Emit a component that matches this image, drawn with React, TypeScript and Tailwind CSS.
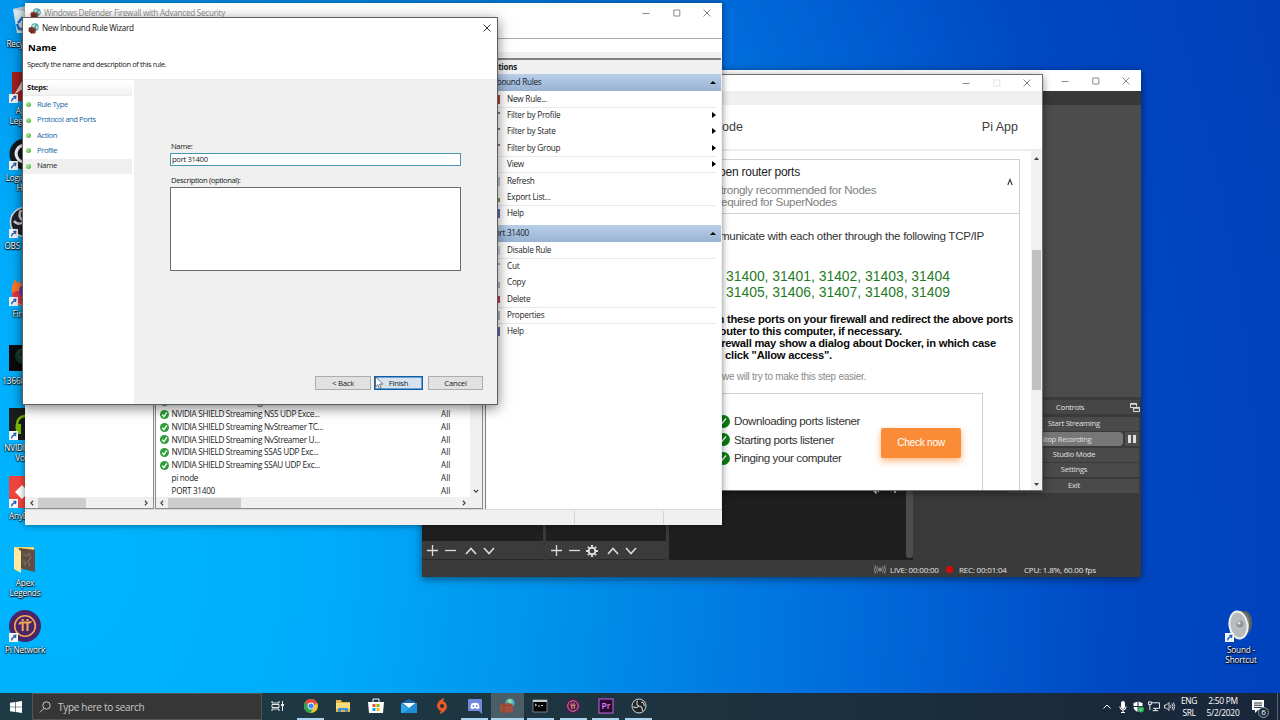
import React from 'react';

const UI = "font-['Open_Sans','Noto_Sans',sans-serif]";
const ARIAL = "font-['Liberation_Sans',Arial,sans-serif]";

function Shield({ className = '' }: { className?: string }) {
  return (
    <svg viewBox="0 0 16 16" className={className}>
      <circle cx="10" cy="6" r="5.6" fill="#4aa3c7" />
      <path d="M7 2.5 Q10 1 11 3 L9.5 6 7.5 7 5.5 4.500Z M12 4 L15 5 14.500 8 12 9Z" fill="#b9e6b4" />
      <path d="M1 6.500 L6 5.500 11 8 11 15 5 15.500 1 12.500Z" fill="#8e3b2c" />
      <path d="M1 9 L5 10.500 11 10 M1 11.500 L5 13 11 12.500 M5 8 V15" stroke="#4f1d17" strokeWidth=".7" fill="none" />
    </svg>
  );
}

function Caption({ color, maxColor }: { color: string; maxColor?: string }) {
  return (
    <div className="flex items-center gap-[22.500px]">
      <svg width="8" height="8" viewBox="0 0 8 8"><path d="M.5 4.500h7" stroke={color} /></svg>
      <svg width="8" height="8" viewBox="0 0 8 8"><path d="M.8 1h6v6h-6z" stroke={maxColor ?? color} fill="none" /></svg>
      <svg width="8" height="8" viewBox="0 0 8 8"><path d="M.5.5l7 7M7.500.5l-7 7" stroke={color} /></svg>
    </div>
  );
}

function Chevron({ dir, className = 'size-[6px] text-[#404040]' }: { dir: 'l' | 'r' | 'd'; className?: string }) {
  const d = { l: 'M5.500 1 2.500 4l3 3', r: 'M2.500 1l3 3-3 3', d: 'M1 2.500l3 3 3-3' }[dir];
  return <svg viewBox="0 0 8 8" className={className}><path d={d} stroke="currentColor" strokeWidth="1.500" fill="none" /></svg>;
}

/* ---------- desktop icons ---------- */

function Shortcut() {
  return (
    <svg viewBox="0 0 9 9" className="absolute bottom-0 left-0 size-[9px]">
      <rect width="9" height="9" fill="#f4f8fc" />
      <path d="M2 7.500Q2 4 5 3.500L3.800 2 7.500 1.500 7 5.500 5.900 4.500Q3.500 5 3.200 7.500z" fill="#2b5fae" />
    </svg>
  );
}

function DeskIcon({ pos, label, shortcut = true, children }: { pos: string; label: string[]; shortcut?: boolean; children: React.ReactNode }) {
  return (
    <div className={`absolute flex w-[70px] flex-col items-center ${pos}`}>
      <div className="relative size-[32px]">
        {children}
        {shortcut && <Shortcut />}
      </div>
      <div className="mt-[3px] text-center text-[8.200px] leading-[10px] tracking-[-0.150px] whitespace-nowrap text-white [text-shadow:0_1px_1px_#000,0_0_2px_#000,1px_1px_1px_#0008]">
        {label.map((l) => <div key={l}>{l}</div>)}
      </div>
    </div>
  );
}

function DesktopIcons() {
  return (
    <>
      <DeskIcon pos="left-[-8px] top-[4px]" label={['Recycle Bin']} shortcut={false}>
        <svg viewBox="0 0 32 32" className="size-full"><path d="M2 5l14-3 12 3-3 24H6z" fill="#dbe7ee" /><path d="M2 5l14 3 12-3-12-3z" fill="#b6c8d4" /><path d="M7 19l4-5 3 3M6 20l2 5h4M16 22l2-5" stroke="#1671d0" strokeWidth="2.500" fill="none" /></svg>
      </DeskIcon>
      <DeskIcon pos="left-[-10px] top-[71px]" label={['Apex', 'Legends']}>
        <svg viewBox="0 0 32 32" className="size-full"><rect x="3" y="1" width="29" height="29" fill="#a5201f" /><path d="M5 24L16 5l12 19-7-5h-9z" fill="#e4c9c4" /></svg>
      </DeskIcon>
      <DeskIcon pos="left-[-10px] top-[138px]" label={['Logitech G', 'HUB']}>
        <svg viewBox="0 0 32 32" className="size-full"><circle cx="16" cy="16" r="15.500" fill="#15191c" /><path d="M21 9a8.500 8.500 0 1 0 3 8h-8" stroke="#fff" strokeWidth="3" fill="none" /></svg>
      </DeskIcon>
      <DeskIcon pos="left-[-10px] top-[206px]" label={['OBS Studio']}>
        <svg viewBox="0 0 32 32" className="size-full"><circle cx="16" cy="16" r="14.500" fill="#22242a" stroke="#d9dde2" strokeWidth="1.500" /><path d="M12 4c-3 6-1 10 4 11M16 15c5 1 8 5 6 10M16 15c-3 3-8 4-11 0" stroke="#cfd2d6" strokeWidth="2.500" fill="none" /></svg>
      </DeskIcon>
      <DeskIcon pos="left-[-10px] top-[274px]" label={['Firefox']}>
        <svg viewBox="0 0 32 32" className="size-full"><path d="M6 5l2 4 4-3-1 4c10-6 20 2 20 10a14 13 0 0 1-28-1C2 13 4 10 6 5z" fill="#ff7a26" /><path d="M3 20c2 6 7 11 14 11 9 0 14-7 14-12-4 7-16 9-22-2-2 0-4 0-6 3z" fill="#e8334d" /><circle cx="17" cy="17" r="7" fill="#6240b8" /></svg>
      </DeskIcon>
      <DeskIcon pos="left-[-10px] top-[341px]" label={['1366847250']} shortcut={false}>
        <svg viewBox="0 0 32 32" className="size-full"><rect y="4" width="32" height="26" fill="#080a0b" /><circle cx="14" cy="15" r="8" fill="#17352b" /><path d="M9 12c3-4 6-5 9-3M10 16c3 3 5 2 8 5" stroke="#3a6450" fill="none" /></svg>
      </DeskIcon>
      <DeskIcon pos="left-[-10px] top-[408px]" label={['NVIDIA RTX', 'Voice']}>
        <svg viewBox="0 0 32 32" className="size-full"><rect width="32" height="32" fill="#1b1d1f" /><path d="M8 20v-4a8 8 0 0 1 16 0v4" stroke="#76b900" strokeWidth="2.500" fill="none" /><path d="M7 16h5v10H9c-2-2-3-5-2-10zM25 16h-5v10h3c2-2 3-5 2-10z" fill="#76b900" /></svg>
      </DeskIcon>
      <DeskIcon pos="left-[-10px] top-[476px]" label={['AnyDesk']}>
        <svg viewBox="0 0 32 32" className="size-full"><rect width="32" height="32" fill="#ef443b" /><path d="M6 16l7-7 7 7-7 7zM18 9l7 7-7 7" fill="#fff" /></svg>
      </DeskIcon>
      <DeskIcon pos="left-[-10px] top-[543px]" label={['Apex', 'Legends']} shortcut={false}>
        <svg viewBox="0 0 32 32" className="size-full"><path d="M5 4h20v22H8z" fill="#f5d36d" /><path d="M10 5l16 2v22l-16-4z" fill="#5e4e43" /><path d="M5 4l7 4v22l-7-4z" fill="#ffe9a0" /><path d="M14 11l4 2 2-3 2 5-3 3 2 5M14 18l3 2-2 3" stroke="#8d7766" fill="none" /></svg>
      </DeskIcon>
      <DeskIcon pos="left-[-10px] top-[610px]" label={['Pi Network']}>
        <svg viewBox="0 0 32 32" className="size-full"><circle cx="16" cy="16" r="16" fill="#4a256b" /><circle cx="16" cy="16" r="10.300" stroke="#f6a952" strokeWidth="1.600" fill="none" /><path d="M10.500 14.500q0-2 2-2h8q1.200 0 1.200-1.500M13.700 13v8M18.500 13v8M13.700 9v2M18.500 9v2" stroke="#f6a952" strokeWidth="2" fill="none" /></svg>
      </DeskIcon>
      <DeskIcon pos="left-[1206px] top-[610px]" label={['Sound -', 'Shortcut']}>
        <svg viewBox="0 0 32 32" className="size-full"><path d="M12 1h9c8 3 8 20 0 24l-8 4z" fill="#5c5f60" /><path d="M20 3c5 4 5 17 0 21" stroke="#8a8d8e" fill="none" /><ellipse cx="13.500" cy="15" rx="9" ry="13.600" fill="#b8bcbd" stroke="#f0f2f2" strokeWidth="2" transform="rotate(-8 13.500 15)" /><circle cx="15" cy="14" r="3.500" fill="#8f9596" /><circle cx="14" cy="13" r="1.500" fill="#dfe3e4" /></svg>
      </DeskIcon>
    </>
  );
}

/* ---------- recording studio window ---------- */

function StudioButton({ children }: { children: React.ReactNode }) {
  return <div className="flex h-[14px] items-center justify-center bg-[#4a4a4a]">{children}</div>;
}

function DockTools({ gear = false }: { gear?: boolean }) {
  return (
    <div className="flex h-[18px] items-center bg-[#3b3b3b] pt-[1px] pl-[4.500px] text-[#dcdcdc]">
      <svg width="11" height="11" viewBox="0 0 11 11"><path d="M5.500 0v11M0 5.500h11" stroke="currentColor" strokeWidth="1.300" /></svg>
      <svg width="11" height="11" viewBox="0 0 11 11" className="ml-[7px]"><path d="M0 5.500h11" stroke="currentColor" strokeWidth="1.300" /></svg>
      {gear && (
        <svg width="12" height="12" viewBox="0 0 12 12" className="ml-[6px]"><circle cx="6" cy="6" r="3.300" stroke="currentColor" strokeWidth="1.900" fill="none" /><path d="M6 0v2M6 10v2M0 6h2M10 6h2M1.800 1.800l1.400 1.400M8.800 8.800l1.400 1.400M10.200 1.800L8.800 3.200M1.800 10.200l1.400-1.400" stroke="currentColor" strokeWidth="1.900" /></svg>
      )}
      <svg width="12" height="8" viewBox="0 0 12 8" className="ml-[9px]"><path d="M1 7l5-5.500L11 7" stroke="currentColor" strokeWidth="1.600" fill="none" /></svg>
      <svg width="12" height="8" viewBox="0 0 12 8" className="ml-[6px]"><path d="M1 1l5 5.500L11 1" stroke="currentColor" strokeWidth="1.600" fill="none" /></svg>
    </div>
  );
}

function StudioWindow() {
  return (
    <div className="absolute left-[422px] top-[70px] flex h-[507px] w-[719px] flex-col bg-[#3a3a3a] text-[#e4e4e4] shadow-[0_2px_8px_rgba(0,0,0,.5)]">
      <div className="flex h-[21px] shrink-0 items-center justify-end bg-white pr-[11px]"><Caption color="#8a8a8a" /></div>
      <div className="h-[14px] shrink-0 bg-[#383838]" />
      <div className="h-[292px] shrink-0 bg-[#4c4c4c]" />
      <div className="flex h-[163px] shrink-0 gap-[3px]">
        <div className="flex w-[121px] flex-col border-b border-[#282828]"><div className="grow bg-[#1f1f1f]" /><DockTools /></div>
        <div className="flex w-[120px] flex-col border-b border-[#282828]"><div className="grow bg-[#1f1f1f]" /><DockTools gear /></div>
        <div className="flex w-[244px] justify-end bg-[#1f1f1f]">
          <div className="mt-[92px] mr-[6px] flex gap-[9px]">
            <svg width="10" height="5" viewBox="0 0 10 5"><path d="M1 0l4 4V0M7 3l2-3" stroke="#ddd" fill="none" strokeWidth="1.300" /></svg>
            <svg width="10" height="5" viewBox="0 0 10 5"><path d="M1 2l2-2h4l2 2M5 1v3" stroke="#ddd" fill="none" strokeWidth="1.500" /></svg>
          </div>
          <div className="h-[161px] w-[7px] rounded-b-[3px] bg-[#4d4d4d]" />
        </div>
        <div className="flex grow flex-col pt-[3px] pr-[2px] text-[7.600px] tracking-[-0.220px]">
          <div className="flex h-[14px] items-center bg-[#464646] pt-[1px] pl-[140px]">
            <span className="grow">Controls</span>
            <svg width="10" height="10" viewBox="0 0 10 10" className="mr-[-1px]"><path d="M3.500 4.500H.5v-4h6v3M3.500 4.500h6v4h-6z" stroke="#ddd" fill="none" /><path d="M.5 1h6M3.500 5h6" stroke="#ddd" strokeWidth="1.500" /></svg>
          </div>
          <div className="mt-[3px] ml-[93px] flex flex-col gap-[1.400px] text-[#e0e0e0]">
            <StudioButton>Start Streaming</StudioButton>
            <div className="flex h-[14px] gap-[2px]">
              <div className="flex grow items-center justify-center rounded-sm bg-[#777]">Stop Recording</div>
              <div className="flex w-[14px] items-center justify-center gap-[2px] bg-[#4f4f4f]"><i className="h-[8px] w-[3px] bg-[#e0e0e0]" /><i className="h-[8px] w-[3px] bg-[#e0e0e0]" /></div>
            </div>
            <StudioButton>Studio Mode</StudioButton>
            <StudioButton>Settings</StudioButton>
            <StudioButton>Exit</StudioButton>
          </div>
        </div>
      </div>
      <div className="flex h-[17px] items-center pt-[2px] pl-[452px] text-[8px] tracking-[-0.200px] whitespace-nowrap">
        <svg width="12" height="9" viewBox="0 0 12 9"><circle cx="6" cy="4.500" r="2" fill="#888" /><path d="M3.500 1.500q-2 3 0 6M8.500 1.500q2 3 0 6M1.500.5q-2 4 0 8M10.500.5q2 4 0 8" stroke="#999" fill="none" /></svg>
        <span className="ml-[4px] w-[56px]">LIVE: 00:00:00</span>
        <i className="size-[7px] rounded-full bg-[#d80b0b]" />
        <span className="ml-[6px] w-[65px]">REC: 00:01:04</span>
        <span>CPU: 1.8%, 60.00 fps</span>
      </div>
    </div>
  );
}

/* ---------- node window ---------- */

function Check({ children }: { children: React.ReactNode }) {
  return (
    <div className="flex h-[18.600px] items-center">
      <svg width="13" height="13" viewBox="0 0 13 13"><circle cx="6.500" cy="6.500" r="6.500" fill="#0b7d14" /><path d="M4 9.500L9 3.500M3 7.500l1.500 2" stroke="#fff" strokeWidth="1.300" fill="none" /></svg>
      <span className="mb-[1px] ml-[4px] text-[11.600px] tracking-[-0.410px] text-[#333]">{children}</span>
    </div>
  );
}

function NodeWindow() {
  return (
    <div className={`absolute left-[642px] top-[74px] flex h-[417px] w-[401px] flex-col border border-[#707070] bg-white shadow-[0_2px_8px_rgba(0,0,0,.45)] ${ARIAL}`}>
      <div className="flex h-[16px] shrink-0 items-center justify-end pr-[11px]"><Caption color="#8a8a8a" maxColor="#e4e4e4" /></div>
      <div className="h-[14px] shrink-0 bg-[#f0f0f0]" />
      <div className="flex h-[46px] shrink-0 items-center justify-between border-b-2 border-[#ececec] pr-[24px] pl-[70px] text-[12.500px] text-[#3c3c3c]">
        <span>Node</span><span>Pi App</span>
      </div>
      <div className="flex min-h-0 grow">
        <div className="min-w-0 grow overflow-hidden pt-[8px] pr-[11px]">
          <div className="h-[400px] border border-[#cfcfcf] whitespace-nowrap">
            <div className="flex h-[54px] items-center border-b border-[#cfcfcf] pr-[6px] pl-[69px]">
              <div className="grow text-[11.600px] leading-[12px] tracking-[-0.340px] text-[#808080]">
                <div className="mb-[5px] ml-[-3px] text-[12px] leading-[13px] tracking-[-0.240px] text-[#222]">Open router ports</div>
                <div>Strongly recommended for Nodes</div>
                <div>Required for SuperNodes</div>
              </div>
              <svg width="6" height="8" viewBox="0 0 6 8" className="mt-[-9px]"><path d="M.8 7L3 1.500 5.200 7" stroke="#333" strokeWidth="1.100" fill="none" /></svg>
            </div>
            <div className="mt-[15px] pr-[35px] text-right text-[11.600px] leading-[14px] tracking-[-0.290px] text-[#333]">communicate with each other through the following TCP/IP</div>
            <div className="mt-[25px] pr-[69px] text-right text-[13.900px] leading-[16px] text-[#1f7a1f]">
              <div>31400, 31401, 31402, 31403, 31404</div>
              <div>31405, 31406, 31407, 31408, 31409</div>
            </div>
            <div className="mt-[13px] ml-[40px] text-[11.200px] leading-[12px] font-bold tracking-[-0.240px] text-[#0a0a0a]">
              <div className="w-[329px] text-right">open these ports on your firewall and redirect the above ports</div>
              <div className="w-[218px] text-right">router to this computer, if necessary.</div>
              <div className="w-[312px] text-right">Firewall may show a dialog about Docker, in which case</div>
              <div className="w-[148px] text-right">click "Allow access".</div>
            </div>
            <div className="mt-[10px] ml-[78px] text-[10px] leading-[12px] tracking-[-0.270px] text-[#8a8a8a]">we will try to make this step easier.</div>
            <div className="mt-[10px] mr-[36px] flex h-[130px] justify-between border border-[#cfcfcf] pt-[18px] pr-[21px] pl-[72px]">
              <div><Check>Downloading ports listener</Check><Check>Starting ports listener</Check><Check>Pinging your computer</Check></div>
              <div className="mt-[16px] flex h-[30px] w-[80px] items-center justify-center rounded-[2px] bg-[#fa8c38] text-[10.200px] tracking-[-0.300px] text-white shadow-[0_3px_7px_rgba(250,140,56,.65)]">Check now</div>
            </div>
          </div>
        </div>
        <div className="flex w-[11px] flex-col items-center bg-[#f1f1f1]">
          <svg width="5" height="3" viewBox="0 0 5 3" className="mt-[6px]"><path d="M0 3L2.500 0 5 3z" fill="#444" /></svg>
          <div className="mt-[90px] h-[140px] w-[9px] bg-[#c1c1c1]" />
          <svg width="5" height="3" viewBox="0 0 5 3" className="mt-auto mb-[4px]"><path d="M0 0l2.500 3L5 0z" fill="#444" /></svg>
        </div>
      </div>
    </div>
  );
}

/* ---------- firewall window ---------- */

type Action = { label: string; h: string; line?: boolean; arrow?: boolean; tick: string };

const inbound: Action[] = [
  { label: 'New Rule...', h: 'h-[17px]', line: true, tick: 'bg-[#b04030]' },
  { label: 'Filter by Profile', h: 'h-[16px]', arrow: true, tick: 'bg-[#777] mb-[6px] !h-[2px]' },
  { label: 'Filter by State', h: 'h-[16px]', arrow: true, tick: 'bg-[#777] mb-[6px] !h-[2px]' },
  { label: 'Filter by Group', h: 'h-[17px]', arrow: true, line: true, tick: 'bg-[#777] mb-[6px] !h-[2px]' },
  { label: 'View', h: 'h-[16px]', arrow: true, line: true, tick: 'bg-transparent' },
  { label: 'Refresh', h: 'h-[17px]', tick: 'bg-[#c4c4cc]' },
  { label: 'Export List...', h: 'h-[16px]', line: true, tick: 'bg-[#6aa84f] !h-[4px] mt-[4px]' },
  { label: 'Help', h: 'h-[16px]', tick: 'bg-[#5c6cae]' },
];

const rule: Action[] = [
  { label: 'Disable Rule', h: 'h-[17px]', line: true, tick: 'bg-[#d4d4d8]' },
  { label: 'Cut', h: 'h-[16px]', tick: 'bg-[#aaa] mb-[6px] !h-[2px]' },
  { label: 'Copy', h: 'h-[16px]', tick: 'bg-[#b8b8c4] !h-[6px] mt-[4px]' },
  { label: 'Delete', h: 'h-[17px]', line: true, tick: 'bg-[#c43c4c] !h-[7px]' },
  { label: 'Properties', h: 'h-[16px]', line: true, tick: 'bg-[#b8b8c8]' },
  { label: 'Help', h: 'h-[16px]', tick: 'bg-[#5c6cae]' },
];

function ActionRows({ items }: { items: Action[] }) {
  return (
    <div className="pr-[5px] pl-[11px]">
      {items.map((a) => (
        <div key={a.label} className={`flex items-center border-b ${a.line ? 'border-[#e9e9e9]' : 'border-transparent'} ${a.h}`}>
          <i className={`h-[9px] w-[3px] ${a.tick}`} />
          <span className="ml-[7px] grow text-[8.200px] tracking-[-0.230px]">{a.label}</span>
          {a.arrow && <svg width="4" height="6" viewBox="0 0 4 6" className="mb-[1px]"><path d="M0 0l4 3-4 3z" fill="#000" /></svg>}
        </div>
      ))}
    </div>
  );
}

function ActionHead({ children }: { children: React.ReactNode }) {
  return (
    <div className="flex h-[17px] items-center justify-between bg-linear-to-b from-[#b9cfe8] to-[#98b3d3] pr-[5px] pl-[4px] text-[8.200px] tracking-[-0.280px] text-[#16202c]">
      <span>{children}</span>
      <svg width="6" height="3" viewBox="0 0 6 3"><path d="M0 3l3-3 3 3z" fill="#000" /></svg>
    </div>
  );
}

const rules: [string, boolean][] = [
  ['NVIDIA SHIELD Streaming NSS TCP Exce...', true],
  ['NVIDIA SHIELD Streaming NSS UDP Exce...', true],
  ['NVIDIA SHIELD Streaming NvStreamer TC...', true],
  ['NVIDIA SHIELD Streaming NvStreamer U...', true],
  ['NVIDIA SHIELD Streaming SSAS UDP Exc...', true],
  ['NVIDIA SHIELD Streaming SSAU UDP Exc...', true],
  ['pi node', false],
  ['PORT 31400', false],
];

function FirewallWindow() {
  return (
    <div className="absolute left-[25px] top-[3px] flex h-[522px] w-[697px] flex-col bg-white text-[#1c1c1c] shadow-[0_0_7px_rgba(0,0,0,.5)]">
      <div className="flex h-[20px] shrink-0 items-center pr-[11px] pl-[5px]">
        <Shield className="size-[11px]" />
        <span className="ml-[3px] grow text-[8.100px] tracking-[-0.240px] text-[#8d8d8d]">Windows Defender Firewall with Advanced Security</span>
        <Caption color="#8a8a8a" />
      </div>
      <div className="h-[16px] shrink-0 border-b border-[#a8a8a8]" />
      <div className="h-[13px] shrink-0" />
      <div className="flex grow gap-[2px] bg-[#f0f0f0] pt-[6px]">
        <div className="flex w-[129px] flex-col border border-l-0 border-[#8c8c8c] bg-white">
          <div className="mt-auto flex h-[11px] items-center bg-[#f0f0f0] px-[4px]">
            <Chevron dir="l" /><div className="ml-[3px] h-[10px] w-[48px] bg-[#cdcdcd]" /><Chevron dir="r" className="ml-auto size-[6px] text-[#404040]" />
          </div>
        </div>
        <div className="ml-[-1px] flex w-[328px] flex-col border border-[#8c8c8c] bg-white">
          <div className="flex grow">
            <div className="flex grow flex-col justify-end pl-[4px] text-[8.200px] tracking-[-0.300px]">
              {rules.map(([name, ok]) => (
                <div key={name} className="flex h-[12.700px] items-center whitespace-nowrap">
                  <div className="w-[11.500px]">
                    {ok && <svg width="9" height="9" viewBox="0 0 9 9"><circle cx="4.500" cy="4.500" r="4.500" fill="#2f9e38" /><path d="M2.200 4.600l1.700 2L6.800 2.300" stroke="#fff" strokeWidth="1.400" fill="none" /></svg>}
                  </div>
                  <span className="w-[269.500px]">{name}</span><span className="tracking-normal">All</span>
                </div>
              ))}
            </div>
            <div className="flex w-[12px] flex-col items-center justify-end bg-[#f0f0f0] pb-[3px]"><Chevron dir="d" /></div>
          </div>
          <div className="flex h-[11px] items-center bg-[#f0f0f0] pr-[15px] pl-[3px]">
            <Chevron dir="l" /><div className="ml-[3px] h-[10px] w-[73px] bg-[#cdcdcd]" /><Chevron dir="r" className="ml-auto size-[6px] text-[#404040]" />
          </div>
        </div>
        <div className="mr-[1px] grow border-t-2 border-l border-[#808080] bg-white">
          <div className="flex h-[14px] items-center bg-[#f0f0f0] pl-[3px] text-[8px] font-bold tracking-[-0.250px]">Actions</div>
          <ActionHead>Inbound Rules</ActionHead>
          <ActionRows items={inbound} />
          <div className="h-[3px]" />
          <ActionHead>port 31400</ActionHead>
          <ActionRows items={rule} />
        </div>
      </div>
      <div className="flex h-[16px] shrink-0 items-stretch border-t border-[#d8d8d8] bg-[#f0f0f0] py-[1px]">
        <div className="w-[550px] border-r border-[#d4d4d4]" /><div className="w-[89px] border-r border-[#d4d4d4]" />
      </div>
    </div>
  );
}

/* ---------- wizard ---------- */

const steps = ['Rule Type', 'Protocol and Ports', 'Action', 'Profile', 'Name'];

function Wizard() {
  return (
    <div className="absolute left-[22px] top-[17px] flex h-[388px] w-[476px] flex-col border border-[#5e5e5e] bg-white text-[#1a1a1a] shadow-[0_3px_12px_rgba(0,0,0,.5)]">
      <div className="flex h-[20px] shrink-0 items-center pr-[6px] pl-[5px]">
        <Shield className="size-[11px]" />
        <span className="ml-[3px] grow text-[8.200px] tracking-[-0.310px] text-[#111]">New Inbound Rule Wizard</span>
        <svg width="8" height="8" viewBox="0 0 8 8"><path d="M.5.5l7 7M7.500.5l-7 7" stroke="#333" /></svg>
      </div>
      <div className="flex h-[42px] shrink-0 flex-col border-b border-[#ececec] pt-[4px]">
        <div className="pl-[5px] text-[9.500px] leading-[12px] font-bold text-black">Name</div>
        <div className="mt-[5px] pl-[4px] text-[7.500px] leading-[10px] tracking-[-0.400px]">Specify the name and description of this rule.</div>
      </div>
      <div className="flex grow bg-[#f0f0f0] text-[7.700px] tracking-[-0.430px]">
        <div className="w-[111px] border-r-2 border-white bg-white">
          <div className="flex h-[15.500px] items-center border-b border-[#ececec] bg-linear-to-b from-white to-[#f2f2f2] pt-[1px] pl-[4px] font-bold tracking-[-0.350px]">Steps:</div>
          <div className="pt-[1.500px]">
            {steps.map((s, i) => (
              <div key={s} className={`flex h-[15.400px] items-center pl-[3px] ${i === 4 ? 'bg-[#f0f0f0] text-[#222]' : 'text-[#1a66a5]'}`}>
                <i className="size-[5px] rounded-full bg-radial-[at_35%_30%] from-[#b5e89c] to-[#35a52c]" />
                <span className="ml-[6px]">{s}</span>
              </div>
            ))}
          </div>
        </div>
        <div className="flex grow flex-col pl-[36px]">
          <div className="mt-[61px] pl-[1px] leading-[10px]">Name:</div>
          <div className="mt-[2px] flex h-[13px] w-[291px] items-center border border-[#4a94b8] bg-white pl-[1px] tracking-[-0.350px]">port 31400</div>
          <div className="mt-[9px] pl-[1px] leading-[10px]">Description (optional):</div>
          <div className="mt-[2px] h-[84px] w-[291px] border border-[#6a6a6a] bg-white" />
          <div className="mt-auto mb-[14px] ml-[145px] flex text-center leading-[12px] tracking-[-0.250px]">
            <div className="h-[14px] w-[56px] border border-[#adadad] bg-[#e1e1e1]">&lt; Back</div>
            <div className="mr-[5px] ml-[3px] h-[14px] w-[49px] border border-[#0c5fa8] bg-[#d5e3ef] shadow-[inset_0_0_0_.5px_#0c5fa8]">Finish</div>
            <div className="h-[14px] w-[55px] border border-[#adadad] bg-[#e1e1e1]">Cancel</div>
          </div>
        </div>
      </div>
    </div>
  );
}

/* ---------- taskbar ---------- */

function Task({ on, active, children }: { on?: boolean; active?: boolean; children: React.ReactNode }) {
  return (
    <div className={`flex w-[32.800px] flex-col items-center ${active ? 'bg-white/20' : ''}`}>
      <svg width="16" height="16" viewBox="0 0 16 16" className="mt-[5px]">{children}</svg>
      <i className={`mt-auto h-[2px] ${active ? 'w-full' : 'w-[27px]'} ${on ? 'bg-[#a9d3ee]' : ''}`} />
    </div>
  );
}

function Taskbar() {
  return (
    <div className="absolute inset-x-0 bottom-0 flex h-[27px] bg-linear-to-r from-[#1f3b46] via-[#1d3440] to-[#18263a] text-white">
      <div className="flex w-[32px] items-center justify-center">
        <svg width="12" height="12" viewBox="0 0 12 12"><path d="M0 1.700L5.400 1v4.700H0zM6 .9L12 0v5.700H6zM0 6.300h5.400V11L0 10.300zM6 6.300h6V12l-6-.9z" fill="#fff" /></svg>
      </div>
      <div className="flex w-[229.500px] items-center border border-[#505658] bg-[#363636] pt-[1px] pl-[6px] text-[#c8c8c8]">
        <svg width="12" height="12" viewBox="0 0 12 12"><circle cx="7.500" cy="4.500" r="3.700" stroke="currentColor" fill="none" /><path d="M5 7.300L.8 11.500" stroke="currentColor" /></svg>
        <span className="ml-[7px] text-[10px] tracking-[-0.300px]">Type here to search</span>
      </div>
      <Task><path d="M2 3v2h7V3M2 13v-2h7v2M2 6.500h7v3H2zM12.500 3v10" stroke="#e8e8e8" fill="none" /><path d="M11 6h3v2h-3z" fill="#e8e8e8" /></Task>
      <Task on>
        <circle cx="8" cy="8" r="7" fill="#f2c42c" /><path d="M8 8L1.900 4.500A7 7 0 0 1 14.100 4.500z" fill="#e04a3a" /><path d="M8 8L1.900 4.500A7 7 0 0 0 7.500 15l3-5z" fill="#2fa24f" /><path d="M2 4.500L5.200 10 8 8zM8 4.500h6.100L11 8z" fill="#e04a3a" /><path d="M1.900 4.500L5 9.700 7 8z" fill="#2fa24f" /><circle cx="8" cy="8" r="3.400" fill="#fff" /><circle cx="8" cy="8" r="2.600" fill="#4285f4" />
      </Task>
      <Task><path d="M1 2h5l1 2h8v10H1z" fill="#e8b540" /><path d="M1 5h14v6H1z" fill="#fbdc7c" /><path d="M3 14v-4h10v4h-3v-2H6v2z" fill="#3f91d6" /></Task>
      <Task><path d="M0 4h16l-1 11H1z" fill="#fff" /><path d="M5 4V1h6v3" stroke="#fff" fill="none" /><path d="M4.500 6h3v3h-3z" fill="#f25022" /><path d="M8.500 6h3v3h-3z" fill="#7fba00" /><path d="M4.500 10h3v3h-3z" fill="#00a4ef" /><path d="M8.500 10h3v3h-3z" fill="#ffb900" /></Task>
      <Task><path d="M0 5l8-4 8 4v10H0z" fill="#1567ae" /><path d="M1.500 5h13L8 10z" fill="#fff" /><path d="M0 5l8 5.500L16 5v10H0z" fill="#2fa8e8" /><path d="M16 5L2 15h14z" fill="#1d8fd8" /></Task>
      <Task><path d="M10.500 0L9 3.200a5.300 5.300 0 0 1 3.500 7.300C11.200 13.600 8.500 15 5.500 16L7 12.900A5.300 5.300 0 0 1 3.500 5.500C4.800 2.500 7.500 1 10.500 0z" fill="#e85a28" /><circle cx="8" cy="8" r="2" fill="#1d3440" /></Task>
      <Task on><path d="M2 1h12q1 0 1 1v14l-3-3H2q-1 0-1-1V2q0-1 1-1z" fill="#7289da" /><path d="M4.500 5.500Q8 4 11.500 5.500q1.200 2.500 1 4.500Q11 11.300 10 11l-.6-.8H6.600L6 11q-1 .3-2.500-1-.2-2 1-4.500z" fill="#fff" /><circle cx="6.300" cy="8" r=".9" fill="#7289da" /><circle cx="9.700" cy="8" r=".9" fill="#7289da" /></Task>
      <Task on active><circle cx="11" cy="5" r="4.600" fill="#4fb3cf" /><path d="M9 2l3-1 1 3-3 2z" fill="#a4e08c" /><path d="M1 6l9-1 4 2v7l-9 1-4-2z" fill="#a44f3c" /><path d="M1 6l4 1.500V15M5 7.500l9-.5" stroke="#7c3a2c" strokeWidth=".6" fill="none" /></Task>
      <Task on><path d="M1 2h14v12H1z" fill="#050505" stroke="#8e9598" strokeWidth=".8" /><path d="M1 2h14v2H1z" fill="#c5cacd" /><path d="M3 6l1.500 1L3 8M6 8h2M9 7.500h2" stroke="#fff" strokeWidth=".8" fill="none" /></Task>
      <Task on><circle cx="8" cy="8" r="7.500" fill="#4e1c52" /><circle cx="8" cy="8" r="5.300" stroke="#e0759b" fill="none" /><path d="M5.200 7h5.300M6.800 7v4M9.200 7v4M6.800 4.700v1M9.200 4.700v1" stroke="#f0a071" fill="none" /></Task>
      <Task on><rect x="1" y="1" width="14" height="14" fill="#2a0a33" stroke="#c863e0" /><text x="8" y="11" fontSize="8.500" textAnchor="middle" fill="#dd86f2" fontWeight="600">Pr</text></Task>
      <Task on><circle cx="8" cy="8" r="7" fill="#1f2224" stroke="#d5d8da" /><path d="M6.500 2.500C5 5.500 6 7.500 8 8c2.500.3 4 2.300 3.200 5M8 8c-1.500 2-4 2-5.500.5M10 4c2 0 3.500 2 3 4" stroke="#c7cacc" strokeWidth="1.200" fill="none" /></Task>
      <div className="ml-auto flex items-center text-center text-[8.400px] leading-[12px]">
        <svg width="8" height="5" viewBox="0 0 8 5"><path d="M.5 4.500L4 1l3.500 3.500" stroke="#fff" fill="none" /></svg>
        <svg width="8" height="12" viewBox="0 0 8 12" className="ml-[8px]"><rect x="2" width="4" height="8" rx="2" fill="#fff" /><path d="M.8 5.500q0 3.500 3.200 3.500t3.200-3.500M4 9v3M2 11.500h4" stroke="#fff" fill="none" /></svg>
        <svg width="11" height="12" viewBox="0 0 11 12" className="ml-[6px]"><path d="M5 .5l4.500 1.500v4Q9 9.500 5 11 1 9.500.5 6V2z" fill="#fff" /><path d="M5 0v11M0 5.500h10" stroke="#1a2a3c" /><circle cx="8" cy="8.500" r="3" fill="#27ae4f" /><path d="M6.600 8.500l1 1 1.800-2" stroke="#fff" strokeWidth=".7" fill="none" /></svg>
        <svg width="12" height="11" viewBox="0 0 13 11" className="ml-[4px]"><path d="M3.500 1.500h9v6h-7M8 7.500V10M5 10h6M.5.5h3v3h-3zM2 3.500v6" stroke="#fff" fill="none" /></svg>
        <svg width="11" height="11" viewBox="0 0 11 11" className="ml-[4px]"><path d="M.5 4h2L5 1.500v8L2.500 7h-2zM6.500 4q1 1.500 0 3M8 2.500q2 3 0 6M9.500 1.500q2.500 4 0 8" stroke="#fff" strokeWidth=".8" fill="none" /></svg>
        <div className="ml-[5px] w-[18px] tracking-[-0.300px]"><div>ENG</div><div>SRL</div></div>
        <div className="ml-[8px] w-[34px] tracking-[-0.250px] whitespace-nowrap"><div>2:50 PM</div><div>5/2/2020</div></div>
        <div className="relative mr-[7px] ml-[10px] h-[18px] w-[20px]">
          <svg width="12" height="13" viewBox="0 0 12 13" className="mt-[2px] ml-[2px]"><path d="M0 0h12v10H6l-3 3v-3H0z" fill="#fff" /><path d="M2 3h8M2 5.200h8M2 7.400h8" stroke="#1a2a3c" /></svg>
          <div className="absolute right-[1px] bottom-[-2px] flex size-[11px] items-center justify-center rounded-full border border-[#8d969e] bg-[#1f2d3d] text-[8px] leading-none">6</div>
        </div>
        <div className="h-[27px] w-[3px] border-l border-[#5a6675]" />
      </div>
    </div>
  );
}

export default function App() {
  return (
    <div className={`relative h-[720px] w-[1280px] overflow-hidden bg-[radial-gradient(ellipse_1200px_1500px_at_60px_560px,#00b6ff_0%,#00acfb_22%,#008eea_44%,#006cdc_66%,#0048c4_88%,#003cb6_115%)] ${UI}`}>
      <DesktopIcons />
      <StudioWindow />
      <NodeWindow />
      <FirewallWindow />
      <Wizard />
      <svg viewBox="0 0 10 15" className="absolute left-[375px] top-[376px] h-[14px] w-[9px]"><path d="M.6.8v11l2.600-2.400L5 13.600l1.800-.8-1.800-4H8.800z" fill="#fff" stroke="#333" strokeWidth=".7" /></svg>
      <Taskbar />
    </div>
  );
}
